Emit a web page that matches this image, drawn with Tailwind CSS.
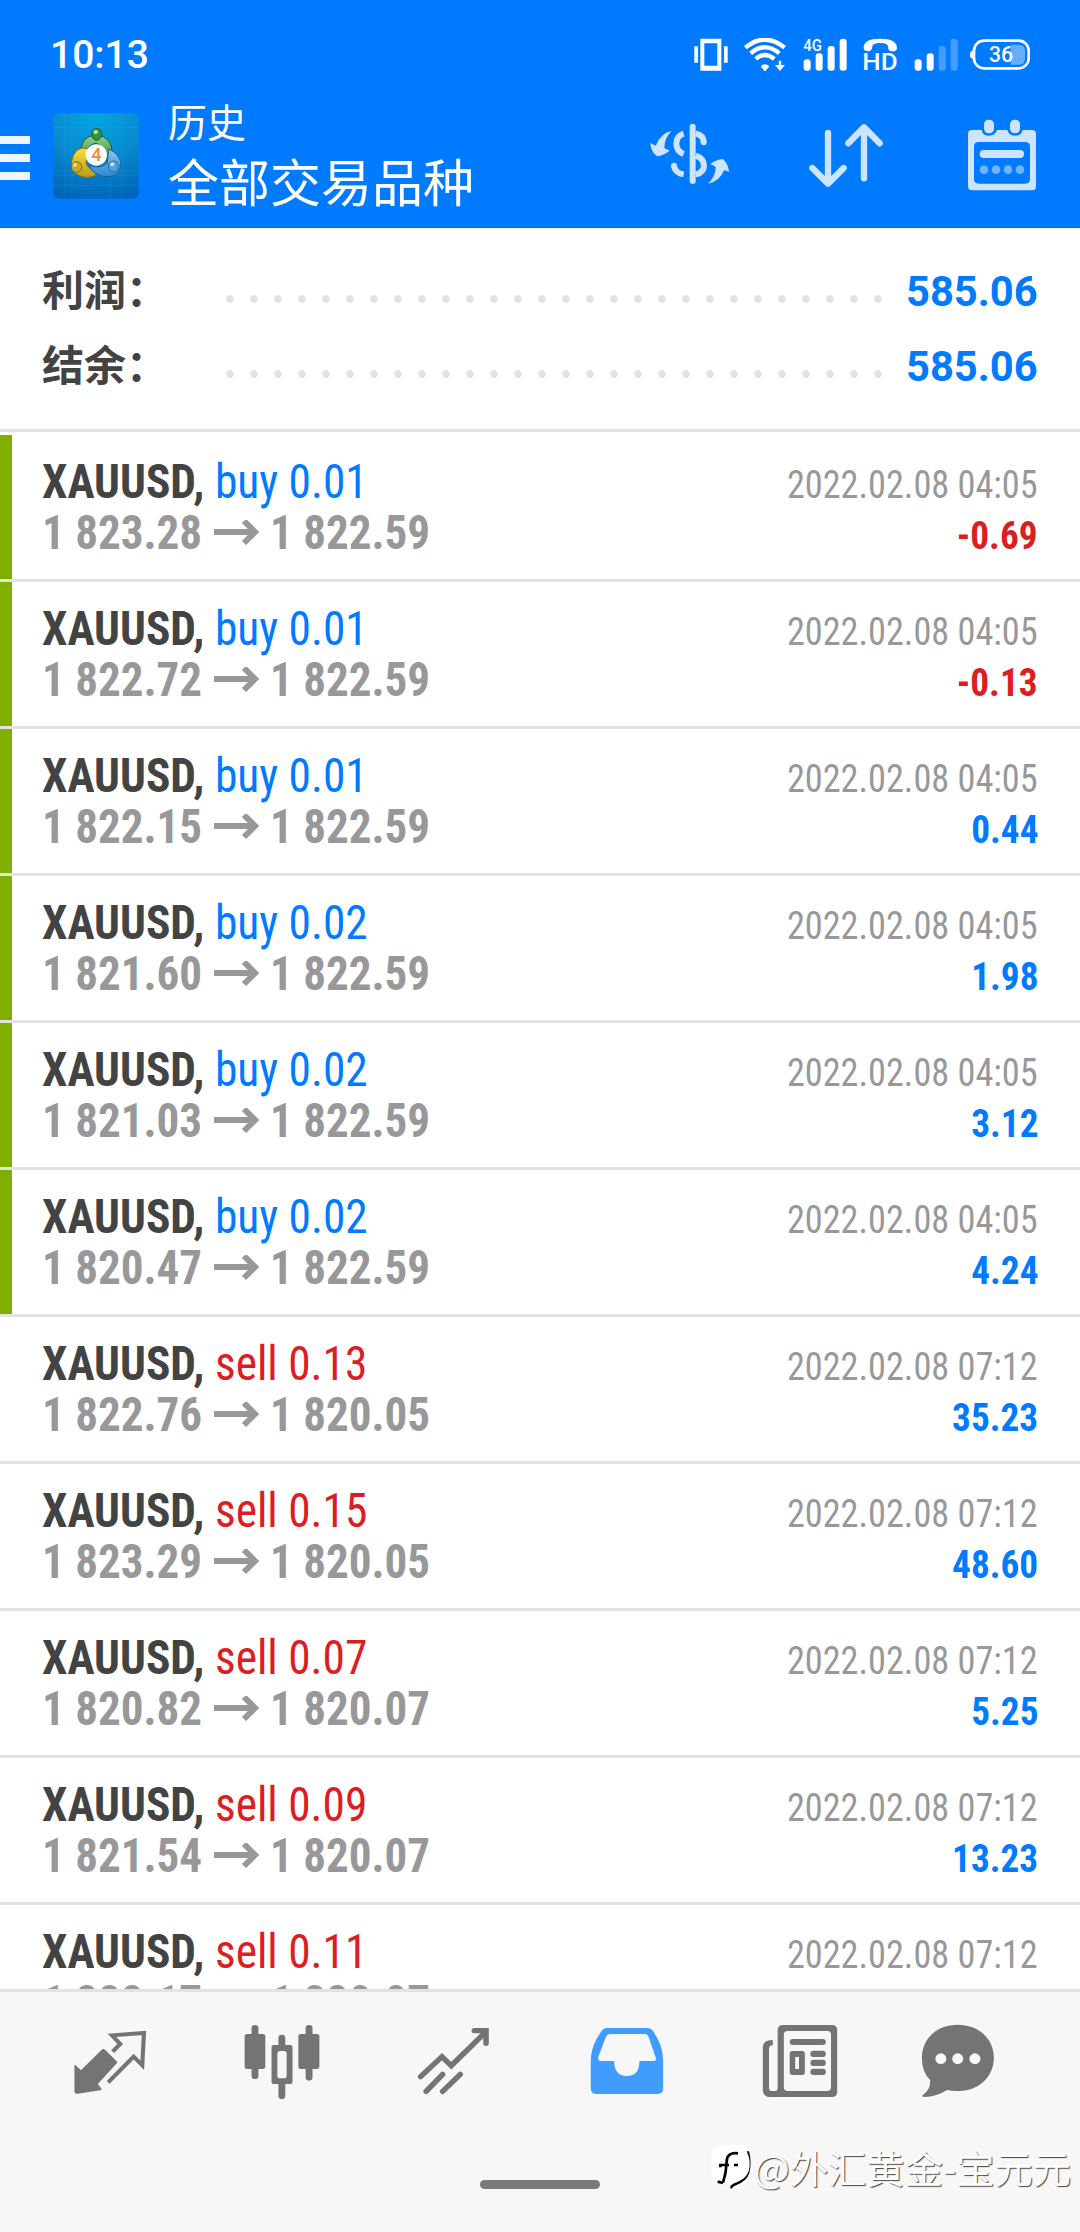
<!DOCTYPE html>
<html lang="zh-CN">
<head>
<meta charset="utf-8">
<title>历史</title>
<script src="https://cdn.jsdelivr.net/npm/@tailwindcss/browser@4"></script>
</head>
<body class="bg-white font-['Roboto','Noto_Sans_CJK_SC',sans-serif]">
<div class="relative flex h-[2232px] w-[1080px] flex-col overflow-hidden bg-white">

<header class="flex h-[228px] shrink-0 flex-col border-b border-[#0070e8] bg-[#007aff] text-white">
  <div class="flex h-[104px] items-center justify-between pt-1 pr-[50px] pl-[50px]">
    <span class="pt-[2px] text-[39px] font-medium leading-none">10:13</span>
    <div class="flex items-center">
      <svg class="mr-[16px] h-[33px] w-[34px]" viewBox="221 112 102 99" fill="#fff"><path d="M222 137h11v49h-11zM311 137h11v49h-11z"/><path fill-rule="evenodd" d="M240 114h63v96h-63zM252 128v67h39v-67z"/></svg>
      <svg class="mr-[17px] h-[33px] w-[42px]" viewBox="372 112 126 99" fill="none" stroke="#fff" stroke-width="13"><path d="M376 141Q434 93 494 141M392 158Q434 122 478 158M407 175Q434 151 463 175"/><path d="M422 197Q434 184 448 197L435 213z" fill="#fff" stroke="none"/><path d="M480 180v18" stroke-width="7"/><path d="M465 193h30l-15 18z" fill="#fff" stroke="none"/></svg>
      <svg class="mr-[16px] h-[33px] w-[44px]" viewBox="547 112 132 99" fill="#fff"><text x="548" y="150" font-size="48" font-weight="500" textLength="56" lengthAdjust="spacingAndGlyphs">4G</text><rect x="549" y="176" width="21" height="34" rx="9"/><rect x="585" y="158" width="21" height="52" rx="9"/><rect x="621" y="136" width="21" height="74" rx="9"/><rect x="657" y="114" width="21" height="96" rx="9"/></svg>
      <svg class="mr-[17px] h-[33px] w-[34px]" viewBox="729 112 102 99" fill="#fff"><path d="M731 142Q730 114 780 114Q831 114 831 142Q831 153 815 152Q804 150 804 138Q804 127 780 127Q757 127 757 138Q756 150 745 152Q731 152 731 142z"/><text x="727" y="209" font-size="73" font-weight="500" textLength="106" lengthAdjust="spacingAndGlyphs">HD</text></svg>
      <svg class="mr-[12px] h-[33px] w-[44px]" viewBox="883 112 132 99" fill="#fff"><rect x="885" y="176" width="21" height="34" rx="9"/><rect x="921" y="158" width="21" height="52" rx="9"/><g opacity=".27"><rect x="957" y="136" width="21" height="74" rx="9"/><rect x="993" y="114" width="21" height="96" rx="9"/></g></svg>
      <svg class="h-[33px] w-[60px]" viewBox="1050 112 180 99"><path d="M1060 148v28q-11-6-11-14t11-14z" fill="#fff"/><rect x="1062" y="120" width="164" height="83" rx="30" fill="none" stroke="#fff" stroke-width="8"/><path d="M1172 132h24q19 0 19 18v24q0 18-19 18h-24z" fill="#fff" opacity=".4"/><text x="1107" y="185" font-size="66" font-weight="500" fill="#fff" textLength="72" lengthAdjust="spacingAndGlyphs">36</text></svg>
    </div>
  </div>
  <div class="flex h-[123px] items-start pr-[43px]">
    <div class="mt-8 flex w-[30px] flex-col gap-[10px]"><i class="h-2 bg-[#edf5ff]"></i><i class="h-2 bg-[#edf5ff]"></i><i class="h-2 bg-[#edf5ff]"></i></div>
    <svg class="mt-[9px] ml-[23px] size-[86px]" viewBox="39 39 258 258">
      <defs>
        <radialGradient id="bg" cx=".5" cy="0" r="1.05"><stop offset="0" stop-color="#00a8e2"/><stop offset=".5" stop-color="#0a8bd0"/><stop offset="1" stop-color="#0064b8"/></radialGradient>
        <linearGradient id="gr" x2="0" y2="1"><stop stop-color="#9ad39a"/><stop offset="1" stop-color="#1c8a2c"/></linearGradient>
        <linearGradient id="ye" x2="0" y2="1"><stop stop-color="#f3e23c"/><stop offset="1" stop-color="#b99a1c"/></linearGradient>
        <linearGradient id="bl" x2="0" y2="1"><stop stop-color="#8ccbf2"/><stop offset="1" stop-color="#2a86cf"/></linearGradient>
      </defs>
      <rect x="40" y="40" width="256" height="256" rx="18" fill="url(#bg)"/>
      <path d="M40 82h256M40 212h256M40 225h256M40 256h256M76 40v256M96 40v256M211 40v256M246 40v256" stroke="#56c4ee" stroke-width="2" opacity=".22"/>
      <g stroke-width="3">
        <path d="M124 160Q118 110 169 104Q220 112 216 164L200 184Q195 138 168 130Q146 134 142 152z" fill="url(#gr)" stroke="#17622c"/>
        <path d="M149 147Q102 132 94 188Q96 228 136 232Q160 234 170 222L146 202Q128 186 149 170z" fill="url(#ye)" stroke="#7f6b14"/>
        <path d="M206 147Q244 164 243 198Q234 234 196 230Q160 226 146 196Q180 208 202 190z" fill="url(#bl)" stroke="#185f9e"/>
        <ellipse cx="170" cy="103" rx="15" ry="18" fill="#38903c" stroke="#1b6526"/>
        <circle cx="110" cy="201" r="16" fill="#c8a92b" stroke="#86701a"/>
        <circle cx="221" cy="199" r="16" fill="#4ca3df" stroke="#206ba8"/>
      </g>
      <ellipse cx="167" cy="96" rx="7" ry="6" fill="#b5e2ad"/><circle cx="105" cy="195" r="6" fill="#f1df8a"/><circle cx="217" cy="193" r="6" fill="#c4e4fa"/>
      <circle cx="169" cy="165" r="32" fill="#fff"/>
      <text x="169" y="184" text-anchor="middle" font-size="54" font-weight="500" fill="#f08a3c">4</text>
    </svg>
    <div class="ml-[29px] flex flex-1 flex-col font-['Noto_Sans_CJK_SC',sans-serif]">
      <span class="-mt-[3px] h-[45px] text-[39px] leading-[38px]">历史</span>
      <span class="text-[51px] leading-[68px]">全部交易品种</span>
    </div>
    <div class="mt-[14px] flex">
      <svg class="mr-[80px] h-[74px] w-[79px]" viewBox="91 354 237 222" fill="none" stroke="#cde4ff" stroke-width="18"><path d="M219 380v163" stroke-linecap="round"/><path d="M192 401Q170 408 170 431Q170 453 192 462"/><path d="M228 400Q252 406 252 426" stroke-linecap="butt"/><circle cx="252" cy="427" r="9" fill="#cde4ff" stroke="none"/><path d="M228 467Q253 475 253 498Q252 517 228 524"/><path d="M163 497Q165 518 192 523"/><circle cx="163" cy="497" r="9" fill="#cde4ff" stroke="none"/><path d="M156 393Q124 398 108 437L92 429Q94 458 113 469Q132 466 150 452L134 444Q134 414 156 393zM265 551Q298 546 314 510L328 516Q325 488 309 477Q290 478 272 492L288 500Q288 530 265 551z" fill="#cde4ff" stroke="none"/></svg>
      <svg class="mr-[83px] h-[74px] w-[75px]" viewBox="567 354 225 222" fill="none" stroke="#cde4ff" stroke-width="19" stroke-linecap="round" stroke-linejoin="round"><path d="M624 399v151M577 504l47 47 47-47M732 535V382M685 430l47-48 47 48"/></svg>
      <svg class="h-[74px] w-[70px]" viewBox="1041 354 210 222" fill="#cde4ff"><path fill-rule="evenodd" d="M1056 390h29q2 17 21 17 20 0 25-17h31q4 17 23 17 20 0 23-17h28q12 0 12 12v156q0 13-12 13h-180q-12 0-12-13V402q0-12 12-12zM1076 426q-14 0-14 14v98q0 13 14 13h140q14 0 14-13v-98q0-14-14-14z"/><rect x="1092" y="359" width="30" height="41" rx="14"/><rect x="1170" y="359" width="30" height="41" rx="14"/><rect x="1079" y="450" width="133" height="24" rx="12"/><g opacity=".55"><circle cx="1092" cy="509" r="13"/><circle cx="1128" cy="509" r="13"/><circle cx="1164" cy="509" r="13"/><circle cx="1200" cy="509" r="13"/></g></svg>
    </div>
  </div>
</header>

<section class="flex h-[204px] shrink-0 flex-col border-b-[3px] border-[#e3e3e4] pt-[26px] text-[42px] font-bold">
  <div class="flex h-[75px] items-center pr-[42px] pl-[42px]">
    <span class="w-[184px] leading-[75px] text-[#434343]">利润：</span>
    <div class="mt-[15px] h-2 w-[656px] bg-[radial-gradient(circle_at_4px_4px,#e2e2e4_3.5px,transparent_4.2px)] bg-[length:24px_8px]"></div>
    <span class="ml-auto origin-right scale-x-[.992] leading-[75px] text-[#007aff]">585.06</span>
  </div>
  <div class="flex h-[75px] items-center pr-[42px] pl-[42px]">
    <span class="w-[184px] leading-[75px] text-[#434343]">结余：</span>
    <div class="mt-[15px] h-2 w-[656px] bg-[radial-gradient(circle_at_4px_4px,#e2e2e4_3.5px,transparent_4.2px)] bg-[length:24px_8px]"></div>
    <span class="ml-auto origin-right scale-x-[.992] leading-[75px] text-[#007aff]">585.06</span>
  </div>
</section>

<main id="deals" class="min-h-0 flex-1 overflow-hidden pt-[3px] [font-stretch:75%] font-['Roboto_Condensed','Roboto',sans-serif]"></main>

<nav class="h-[243px] shrink-0 border-t-[3px] border-[#e2e2e3] bg-[#f7f7f7]">
  <div class="grid h-[108px] grid-cols-[172px_171px_173px_173px_174px_142px] justify-items-center pt-7 pl-6 text-[#747474]">
    <svg class="size-20" preserveAspectRatio="none" viewBox="203.2 420 232.3 240" fill="none" stroke="currentColor"><path d="M327 515l22-23-24-26 93-7-5 97-25-26-74 77" stroke-width="12"/><path d="M299 507q3-1 6 2l35 36q2 3-1 5l-55 62 11 15q0 3-4 4l-66 10q-9 1-9-8v-78q3-1 5 2l14 14 60-62z" fill="currentColor" stroke="none"/></svg>
    <svg class="size-20" preserveAspectRatio="none" viewBox="701.3 420 232.3 240" fill="currentColor"><rect x="729" y="435" width="20" height="162" rx="10"/><rect x="709" y="462" width="60" height="105" rx="7"/><rect x="886" y="435" width="20" height="167" rx="10"/><rect x="865" y="462" width="61" height="105" rx="7"/><rect x="807" y="464" width="20" height="42" rx="10"/><rect x="807" y="600" width="20" height="57" rx="10"/><path fill-rule="evenodd" d="M793 495h49q6 0 6 6v105q0 6-6 6h-49q-6 0-6-6V501q0-6 6-6zM812 513q-8 0-8 8v66q0 8 8 8h11q8 0 8-8v-66q0-8-8-8z"/></svg>
    <svg class="size-20" preserveAspectRatio="none" viewBox="1202.8 420 232.3 240" fill="none" stroke="currentColor" stroke-width="16" stroke-linecap="round"><path d="M1222 590l62-60 27 27 98-99"/><path d="M1378 452h34v38" stroke-linejoin="miter"/><path d="M1238 634l48-51M1286 634l51-51"/></svg>
    <svg class="size-20" preserveAspectRatio="none" viewBox="135 420 232.3 240" fill="#409cff"><path fill-rule="evenodd" d="M193 444h118q8 0 14 7 31 44 31 90v84q0 17-16 17H162q-16 0-16-17v-84q0-46 33-90 6-7 14-7zM201 462q-8 0-11 8l-22 60q-3 13 9 13h37q0 45 37 45t36-45h42q8 0 6-9l-22-65q-2-7-11-7z"/></svg>
    <svg class="size-20" preserveAspectRatio="none" viewBox="638.8 420 232.3 240" fill="currentColor"><path fill-rule="evenodd" d="M706 435h141q16 0 16 16v184q0 16-16 16H669q-22 0-22-22V502q0-22 29-22v16q-11 0-11 10v118q0 9 8 9h10q7 0 7-9V451q0-16 16-16zM719 453q-11 0-11 11v157q0 12 11 12h115q11 0 11-12V464q0-11-11-11z"/><rect x="725" y="477" width="105" height="18" rx="9"/><path fill-rule="evenodd" d="M733 513h28q8 0 8 8v56q0 8-8 8h-28q-8 0-8-8v-56q0-8 8-8zM741 531v36h11v-36z"/><rect x="785" y="512" width="45" height="19" rx="9"/><rect x="785" y="539" width="45" height="19" rx="9"/><rect x="785" y="566" width="45" height="19" rx="9"/></svg>
    <svg class="size-20" preserveAspectRatio="none" viewBox="1097.7 420 232.3 240" fill="currentColor"><path d="M1213 434C1276 434 1318 478 1318 534C1318 590 1273 633 1218 633Q1199 634 1182 630Q1152 650 1116 651Q1108 651 1111 646Q1135 628 1133 600Q1109 576 1109 534C1109 478 1150 434 1213 434z"/><g fill="#f9f9f9"><circle cx="1164" cy="536" r="16"/><circle cx="1213" cy="536" r="16"/><circle cx="1263" cy="536" r="16"/></g></svg>
  </div>
  <div class="mx-auto mt-20 h-[9px] w-[120px] rounded-full bg-[#7a7a7a]"></div>
</nav>

<div class="absolute right-[9px] bottom-[40px] flex items-center">
  <svg class="mr-[3px] h-[46px] w-[42px]" viewBox="36 62 126 138"><path d="M60 66h72q22 0 22 24v50q0 40-50 56l2-14H60q-22 0-22-22V88q0-22 22-22z" fill="#fff"/><path d="M117 90Q84 86 83 114q-1 34-11 64M64 132v-7h26M56 175l16 4M105 125h12" fill="none" stroke="#000" stroke-width="8"/><path d="M143 84q15 30 6 60-8 22-34 32-14 4-21 12-2 6 3 9 4-7 14-11 31-11 40-36 8-36-1-66z" fill="#000"/></svg>
  <span class="origin-right scale-x-[1.008] text-[38px] leading-[50px] text-[#fdfdfd] [text-shadow:1px_1px_1px_#444] font-['Noto_Sans_CJK_SC',sans-serif]">@外汇黄金-宝元元</span>
</div>
</div>

<script>
const deals = [
  ['buy', '0.01', '1 823.28', '1 822.59', '04:05', '-0.69'],
  ['buy', '0.01', '1 822.72', '1 822.59', '04:05', '-0.13'],
  ['buy', '0.01', '1 822.15', '1 822.59', '04:05', '0.44'],
  ['buy', '0.02', '1 821.60', '1 822.59', '04:05', '1.98'],
  ['buy', '0.02', '1 821.03', '1 822.59', '04:05', '3.12'],
  ['buy', '0.02', '1 820.47', '1 822.59', '04:05', '4.24'],
  ['sell', '0.13', '1 822.76', '1 820.05', '07:12', '35.23'],
  ['sell', '0.15', '1 823.29', '1 820.05', '07:12', '48.60'],
  ['sell', '0.07', '1 820.82', '1 820.07', '07:12', '5.25'],
  ['sell', '0.09', '1 821.54', '1 820.07', '07:12', '13.23'],
  ['sell', '0.11', '1 822.17', '1 820.07', '07:12', '23.10'],
];
document.getElementById('deals').innerHTML = deals.map(([side, lots, open, close, time, profit]) => `
  <div class="flex h-[147px] border-b-[3px] border-[#e3e3e4]">
    <div class="w-3 shrink-0 ${side === 'buy' ? 'bg-[#7fb000]' : 'bg-transparent'}"></div>
    <div class="flex flex-1 flex-col pt-[21px] pl-[30px] text-[48px] leading-[51px] whitespace-nowrap">
      <div class="flex"><span class="w-[173px]"><b class="inline-block origin-left scale-x-[.945] font-bold text-[#434343]">XAUUSD,</b></span><span class="origin-left scale-x-[.945] ${side === 'buy' ? 'text-[#007aff]' : 'text-[#dc1e23]'}">${side} ${lots}</span></div>
      <div class="flex items-center font-bold text-[#98989b]"><span class="w-[171px]"><span class="inline-block origin-left scale-x-[.938]">${open}</span></span><svg class="mr-[9px] h-[26px] w-[48px]" viewBox="0 0 48 26" fill="none" stroke="currentColor" stroke-width="6"><path d="M1 12h42M31 1l11 11-11 11"/></svg><span class="origin-left scale-x-[.938]">${close}</span></div>
    </div>
    <div class="flex flex-col items-end pt-[25px] pr-[42px] text-[39px] leading-[51px] whitespace-nowrap">
      <span class="origin-right scale-x-[.93] text-[#98989b]">2022.02.08 ${time}</span>
      <b class="origin-right scale-x-[.955] font-bold ${profit[0] === '-' ? 'text-[#dc1e23]' : 'text-[#007aff]'}">${profit}</b>
    </div>
  </div>`).join('');
</script>
</body>
</html>
